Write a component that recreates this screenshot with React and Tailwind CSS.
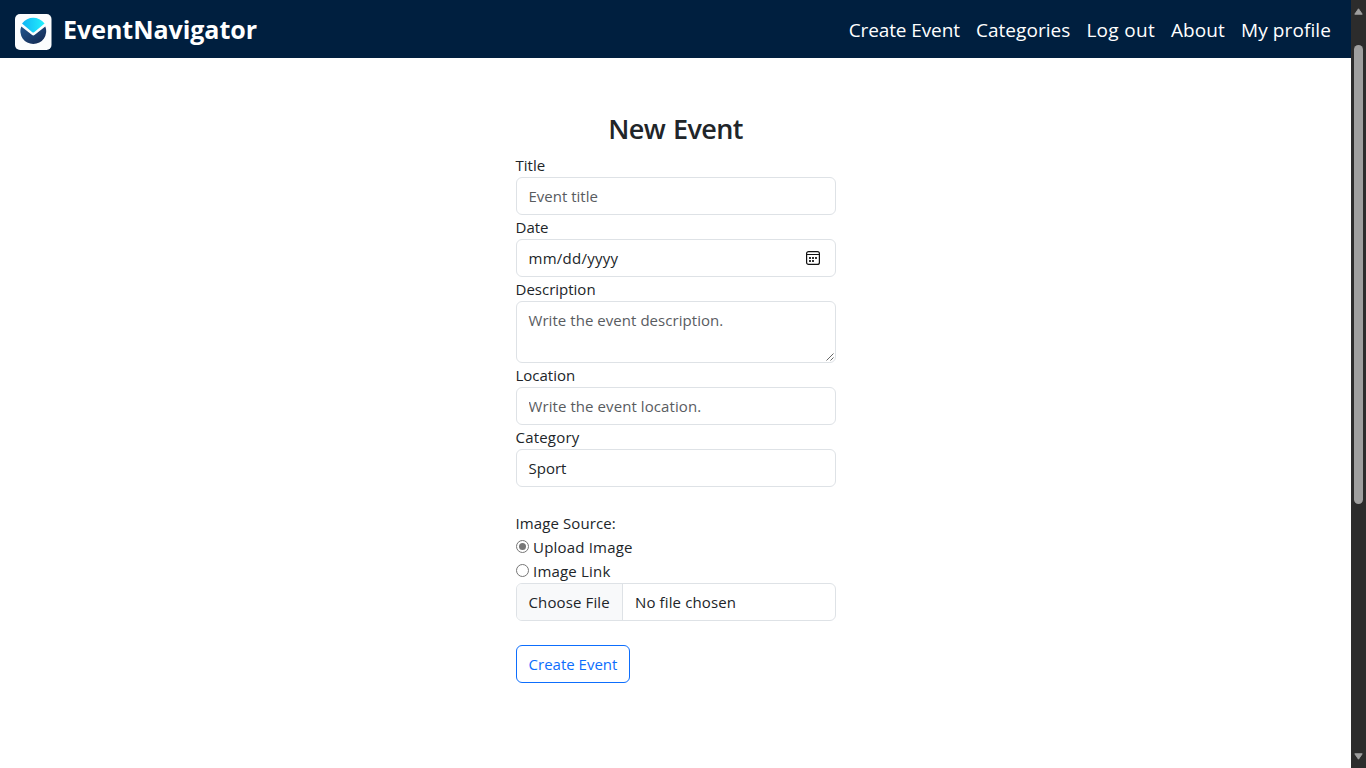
const field =
  "block h-[38px] w-full rounded-md border border-[#dee2e6] bg-white px-[11.5px] text-[15px] leading-6 text-[#212529] outline-none placeholder:text-[#595c5f] placeholder:opacity-100";

function Logo() {
  return (
    <svg width="38" height="38" viewBox="0 0 38 38" className="shrink-0">
      <defs>
        <linearGradient id="fan" x1="0" y1="0" x2="1" y2="0">
          <stop offset="0" stopColor="#12b5f5" />
          <stop offset="1" stopColor="#22f0fc" />
        </linearGradient>
        <linearGradient id="bowl" x1="0" y1="0" x2="1" y2="1">
          <stop offset="0" stopColor="#24568f" />
          <stop offset="1" stopColor="#12264d" />
        </linearGradient>
      </defs>
      <rect x="1" y="1" width="36.5" height="36" rx="5" fill="#fcfdfe" />
      <path d="M8 10.6C11 6.5 15 4.7 19.2 4.7S27.6 6.5 30.6 10.6L20.4 18.9Q19.2 19.9 18 18.9Z" fill="url(#fan)" />
      <path d="M7.3 13.4L17.8 21.8Q19.3 23 20.8 21.8L31.3 13.4A12.9 12.9 0 1 1 7.3 13.4Z" fill="url(#bowl)" />
    </svg>
  );
}

function CalendarIcon() {
  return (
    <svg width="14" height="14" viewBox="0 0 14 14" fill="none">
      <rect x="0.6" y="0.6" width="12.8" height="12.8" rx="2" stroke="#111" strokeWidth="1.2" />
      <path d="M1 3.5H13" stroke="#111" />
      <path d="M3 6h2v2H3zM6 6h2v2H6zM9 6h2v2H9zM3 9h2v2H3zM6 9h2v2H6z" fill="#333" />
    </svg>
  );
}

function Navbar() {
  return (
    <nav className="flex h-[58px] items-center justify-between bg-[#001f3f] pr-5 pl-3.5 text-white">
      <div className="flex items-center gap-[11px] pt-[5px]">
        <Logo />
        <span className="-mt-1.5 text-[25px] leading-[38px] font-bold tracking-[-0.03px]">EventNavigator</span>
      </div>
      <div className="flex gap-4 pt-[2px] text-[19px] leading-[30px]">
        <a className="tracking-[-0.1px]">Create Event</a>
        <a className="tracking-[0.05px]">Categories</a>
        <a className="tracking-[0.3px]">Log out</a>
        <a className="tracking-[0.1px]">About</a>
        <a className="tracking-[0.1px]">My profile</a>
      </div>
    </nav>
  );
}

function Radio({ checked }) {
  return (
    <span className="mb-0.5 flex size-[13px] items-center justify-center rounded-full border border-[#767676] bg-white">
      {checked && <span className="size-[7px] rounded-full bg-[#767676]" />}
    </span>
  );
}

function EventForm() {
  return (
    <form className="ml-[516px] w-80 pt-[54px] text-[15px] leading-6 text-[#212529]">
      <h2 className="mb-[7px] pr-px text-center text-[27px] leading-[34px] font-semibold tracking-[-0.6px] [word-spacing:1.5px]">
        New Event
      </h2>
      <label className="-ml-[0.5px] block">Title</label>
      <input className={field} placeholder="Event title" />
      <label className="-ml-[0.5px] block">Date</label>
      <div className="flex h-[38px] items-center justify-between rounded-md border border-[#dee2e6] pr-[15px] pl-[11.5px]">
        <span className="tracking-[0.25px]">mm/dd/yyyy</span>
        <CalendarIcon />
      </div>
      <label className="-ml-[0.5px] block">Description</label>
      <div className="relative h-[62px] rounded-md border border-[#dee2e6] px-[11.5px] py-1.5 tracking-[0.05px] text-[#595c5f]">
        Write the event description.
        <svg width="8" height="8" viewBox="0 0 8 8" className="absolute right-px bottom-px">
          <path d="M0.5 7.5L7.5 0.5M4.5 7.5L7.5 4.5" stroke="#555" strokeWidth="0.9" />
        </svg>
      </div>
      <label className="-ml-[0.5px] block">Location</label>
      <input className={field + " tracking-[0.08px]"} placeholder="Write the event location." />
      <label className="-ml-[0.5px] block tracking-[0.2px]">Category</label>
      <div className={field + " py-[6px]"}>Sport</div>
      <p className="mt-6 -ml-[0.5px] tracking-[0.1px]">Image Source:</p>
      <label className="flex items-center gap-1 tracking-[0.2px]">
        <Radio checked />
        Upload Image
      </label>
      <label className="flex items-center gap-1 tracking-[0.2px]">
        <Radio />
        Image Link
      </label>
      <div className="flex h-[38px] overflow-hidden rounded-md border border-[#dee2e6] leading-9 tracking-[0.13px]">
        <span className="w-[106px] border-r border-[#dee2e6] bg-[#f8f9fa] pl-[11.5px]">Choose File</span>
        <span className="pl-3">No file chosen</span>
      </div>
      <button type="button" className="mt-6 block h-[38px] w-[114px] rounded-md border border-[#0d6efd] text-[#0d6efd]">
        Create Event
      </button>
    </form>
  );
}

function Scrollbar() {
  return (
    <div className="flex w-[15px] shrink-0 flex-col items-center bg-[#2c2c2c] pt-2 pb-2">
      <svg width="9" height="7" viewBox="0 0 9 7" className="shrink-0">
        <path d="M4.5 0.8L8.2 6.2H0.8Z" fill="#9f9f9f" stroke="#9f9f9f" strokeLinejoin="round" />
      </svg>
      <div className="mt-[30px] h-[459px] w-[9px] rounded-full bg-[#9f9f9f]" />
      <svg width="9" height="7" viewBox="0 0 9 7" className="mt-auto shrink-0">
        <path d="M4.5 6.2L0.8 0.8H8.2Z" fill="#9f9f9f" stroke="#9f9f9f" strokeLinejoin="round" />
      </svg>
    </div>
  );
}

export default function App() {
  return (
    <div className="flex h-[768px] w-[1366px] overflow-hidden bg-white font-['Open_Sans',sans-serif]">
      <main className="w-[1351px]">
        <Navbar />
        <EventForm />
      </main>
      <Scrollbar />
    </div>
  );
}
